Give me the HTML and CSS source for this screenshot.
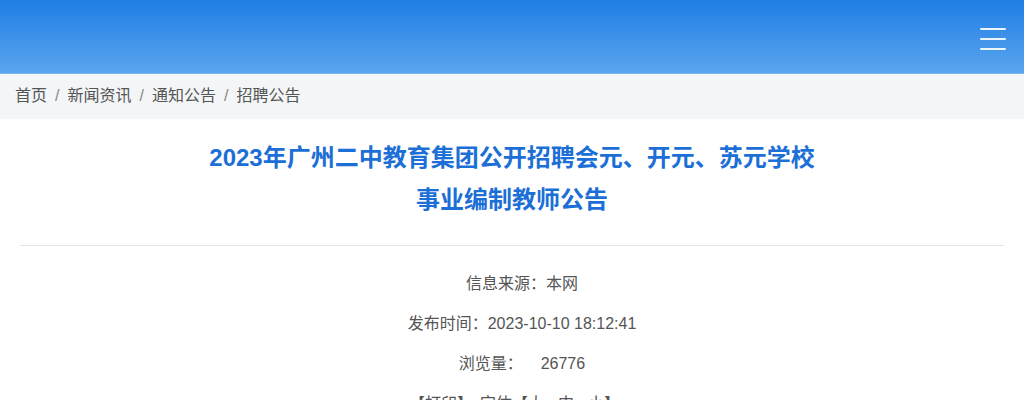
FILE: index.html
```html
<!DOCTYPE html>
<html lang="zh-CN">
<head>
    <meta charset="UTF-8">
    <meta name="viewport" content="width=device-width, initial-scale=1.0">
    <title>招聘公告</title>
    <link rel="stylesheet" href="styles.css">
</head>
<body>
    <div class="header">
        <div class="menu">
            <span></span>
            <span></span>
            <span></span>
        </div>
    </div>

    <div class="crumbs">
        <a href="#">首页</a><span class="sep">/</span><a href="#">新闻资讯</a><span class="sep">/</span><a href="#">通知公告</a><span class="sep">/</span><a href="#">招聘公告</a>
    </div>

    <div class="article">
        <h1 class="title">2023年广州二中教育集团公开招聘会元、开元、苏元学校<br>事业编制教师公告</h1>

        <div class="meta">
            <p>信息来源：本网</p>
            <p>发布时间：2023-10-10 18:12:41</p>
            <p>浏览量：&nbsp;&nbsp;&nbsp; 26776</p>
            <p class="tools"><a href="#">【打印】</a><span class="size">字体【<a href="#">大</a><a href="#">中</a><a href="#">小</a>】</span></p>
        </div>
    </div>
</body>
</html>
```

FILE: styles.css
```css
body{
    margin: 0;
    background: #fff;
    color: #555;
    font: 16px/1.5 "Liberation Sans", "Noto Sans CJK SC", sans-serif;
}
a{
    color: inherit;
    text-decoration: none;
}
.header{
    height: 73px;
    background: linear-gradient(#1e7ee3, #5aa5ef);
    display: flex;
    justify-content: flex-end;
    align-items: center;
    padding-right: 18px;
}
.menu{
    width: 26px;
    display: flex;
    flex-direction: column;
    gap: 8px;
    margin-top: 4px;
}
.menu span{
    height: 2px;
    background: rgba(255, 255, 255, 0.9);
    border-radius: 1px;
}
.crumbs{
    height: 46px;
    line-height: 44px;
    background: #f3f5f7;
    border-top: 1px solid #79b4f1;
    box-sizing: border-box;
    padding-left: 15px;
    color: #555;
}
.crumbs .sep{
    margin: 0 8px;
    color: #888;
}
.article{
    padding: 0 20px;
}
.title{
    margin: 0;
    padding: 18px 0 24px;
    text-align: center;
    font-size: 24px;
    line-height: 42px;
    font-weight: 700;
    color: #1b6fd6;
    border-bottom: 1px solid #e3e3e3;
}
.meta{
    padding: 18px 0 0 20px;
    text-align: center;
}
.meta p{
    margin: 0;
    line-height: 40px;
}
.meta .tools{
    padding-right: 15px;
}
.tools .size{
    margin-left: 7px;
}
.size a + a{
    margin-left: 14px;
}
```
